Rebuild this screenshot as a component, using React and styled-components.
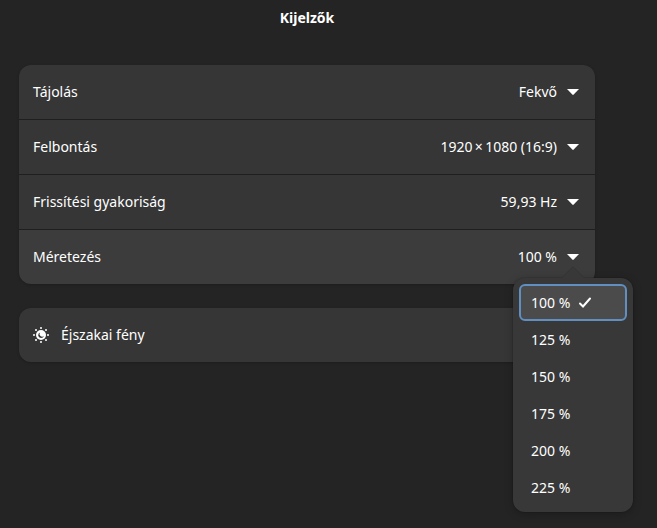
import React, { useState } from 'react';
import styled, { createGlobalStyle } from 'styled-components';

const GlobalStyle = createGlobalStyle`
  * {
    box-sizing: border-box;
  }

  body {
    margin: 0;
    background-color: #242424;
    color: #fff;
    font-family: 'Noto Sans', 'Open Sans', sans-serif;
    font-size: 14px;
    line-height: 20px;
  }

  button {
    font: inherit;
    color: inherit;
  }
`;

const Page = styled.main`
  display: flex;
  flex-direction: column;
  min-height: 100vh;
  padding: 0 62px 16px 19px;
`;

const Title = styled.h1`
  margin: 8px 0 37px;
  font-size: 14px;
  font-weight: 700;
  line-height: 20px;
  text-align: center;
`;

const Card = styled.section`
  display: flex;
  flex-direction: column;
  gap: 1px;
  margin-bottom: 24px;
  border-radius: 12px;
  background-color: #1f1f1f;
  box-shadow: 0 1px 3px rgba(0, 0, 0, 0.2);

  > :first-child > button {
    border-top-left-radius: 12px;
    border-top-right-radius: 12px;
  }

  > :last-child > button {
    border-bottom-left-radius: 12px;
    border-bottom-right-radius: 12px;
  }
`;

const RowWrap = styled.div`
  position: relative;
`;

const Row = styled.button`
  display: flex;
  align-items: center;
  width: 100%;
  height: 54px;
  padding: 0 14px;
  border: 0;
  background-color: ${({ $active }) => ($active ? '#3c3c3c' : '#363636')};
  text-align: left;
  outline: none;

  &:hover {
    background-color: #3c3c3c;
  }
`;

const Label = styled.span`
  flex: 1;
`;

const Arrow = styled.svg`
  width: 16px;
  height: 16px;
  margin-left: 8px;
  fill: #fff;
`;

const NightIcon = styled.svg`
  width: 16px;
  height: 16px;
  margin-right: 12px;
`;

const Popover = styled.div`
  position: absolute;
  top: 48px;
  right: -38px;
  z-index: 1;
  display: flex;
  flex-direction: column;
  width: 120px;
  padding: 6px;
  border-radius: 12px;
  background-color: #383838;
  box-shadow: 0 0 0 1px rgba(0, 0, 0, 0.08), 0 2px 8px rgba(0, 0, 0, 0.25);
`;

const Tip = styled.svg`
  position: absolute;
  top: -12px;
  left: 48px;
  width: 24px;
  height: 13px;
`;

const Option = styled.button`
  display: flex;
  align-items: center;
  gap: 8px;
  height: 37px;
  padding: 0 10px;
  border: 2px solid ${({ $selected }) => ($selected ? '#628fc1' : 'transparent')};
  border-radius: 6px;
  background-color: ${({ $selected }) => ($selected ? '#4b4b4b' : 'transparent')};
  outline: none;
`;

const Check = styled.svg`
  width: 14px;
  height: 14px;
  fill: none;
  stroke: #fff;
  stroke-width: 2;
  stroke-linecap: round;
`;

const settings = [
  { label: 'Tájolás', value: 'Fekvő' },
  { label: 'Felbontás', value: '1920\u2009×\u20091080 (16:9)' },
  { label: 'Frissítési gyakoriság', value: '59,93 Hz' },
];

const scales = [100, 125, 150, 175, 200, 225];

const SettingRow = ({ label, value, active, onClick, children }) => (
  <RowWrap>
    <Row type="button" $active={active} onClick={onClick} aria-haspopup="listbox">
      <Label>{label}</Label>
      <span>{value}</span>
      <Arrow viewBox="0 0 16 16" aria-hidden="true">
        <path d="M2 5h12l-5.300 5.600a1 1 0 0 1-1.400 0z" />
      </Arrow>
    </Row>
    {children}
  </RowWrap>
);

const App = () => {
  const [scale, setScale] = useState(100);
  const [open, setOpen] = useState(true);

  const pick = (value) => {
    setScale(value);
    setOpen(false);
  };

  return (
    <>
      <GlobalStyle />
      <Page>
        <Title>Kijelzők</Title>
        <Card>
          {settings.map((item) => (
            <SettingRow key={item.label} label={item.label} value={item.value} />
          ))}
          <SettingRow
            label="Méretezés"
            value={`${scale} %`}
            active={open}
            onClick={() => setOpen(!open)}
          >
            {open && (
              <Popover role="listbox" aria-label="Méretezés">
                <Tip viewBox="0 0 24 13" aria-hidden="true">
                  <path d="M0 13L11 1.500Q12 0.500 13 1.500L24 13z" fill="#383838" />
                  <path d="M1 12L11 1.500Q12 0.500 13 1.500L23 12" fill="none" stroke="#343434" />
                </Tip>
                {scales.map((value) => (
                  <Option
                    key={value}
                    type="button"
                    role="option"
                    aria-selected={value === scale}
                    $selected={value === scale}
                    onClick={() => pick(value)}
                  >
                    {`${value} %`}
                    {value === scale && (
                      <Check viewBox="0 0 14 14" aria-hidden="true">
                        <path d="M2 7.500L5 10.500L12 2.500" />
                      </Check>
                    )}
                  </Option>
                ))}
              </Popover>
            )}
          </SettingRow>
        </Card>
        <Card>
          <RowWrap>
            <Row type="button">
              <NightIcon viewBox="0 0 16 16" aria-hidden="true">
                <g fill="#fff">
                  <circle cx="8" cy="8" r="5" />
                  <circle cx="8" cy="1" r="1" />
                  <circle cx="8" cy="15" r="1" />
                  <circle cx="1" cy="8" r="1" />
                  <circle cx="15" cy="8" r="1" />
                  <circle cx="3" cy="3" r="1" />
                  <circle cx="13" cy="3" r="1" />
                  <circle cx="3" cy="13" r="1" />
                  <circle cx="13" cy="13" r="1" />
                </g>
                <path d="M7.200 5.400A2.900 2.900 0 1 0 10.900 8.700A2.300 2.300 0 0 1 7.200 5.400z" fill="#363636" />
              </NightIcon>
              <Label>Éjszakai fény</Label>
            </Row>
          </RowWrap>
        </Card>
      </Page>
    </>
  );
};

export default App;
